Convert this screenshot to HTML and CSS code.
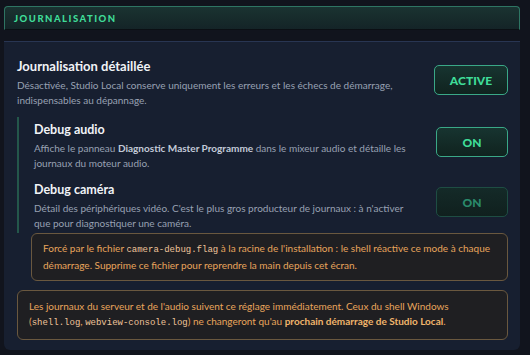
FILE: index.html
```html
<!DOCTYPE html>
<html lang="fr">
<head>
  <meta charset="UTF-8" />
  <title>Journalisation</title>
  <link rel="stylesheet" href="styles.css">
</head>
<body>
  <div class="section-head">JOURNALISATION</div>

  <div class="panel">
    <div class="row main-row">
      <div class="row-text">
        <div class="row-title big">Journalisation détaillée</div>
        <div class="row-desc">Désactivée, Studio Local conserve uniquement les erreurs et les échecs de démarrage, indispensables au dépannage.</div>
      </div>
      <button class="toggle wide">ACTIVE</button>
    </div>

    <div class="sub-group">
      <div class="row">
        <div class="row-text">
          <div class="row-title">Debug audio</div>
          <div class="row-desc">Affiche le panneau <b>Diagnostic Master Programme</b> dans le mixeur audio et détaille les journaux du moteur audio.</div>
        </div>
        <button class="toggle">ON</button>
      </div>
      <div class="row">
        <div class="row-text">
          <div class="row-title">Debug caméra</div>
          <div class="row-desc">Détail des périphériques vidéo. C'est le plus gros producteur de journaux : à n'activer que pour diagnostiquer une caméra.</div>
        </div>
        <button class="toggle dim" disabled>ON</button>
      </div>
    </div>

    <div class="note forced">Forcé par le fichier <code>camera-debug.flag</code> à la racine de l'installation : le shell réactive ce mode à chaque démarrage. Supprime ce fichier pour reprendre la main depuis cet écran.</div>

    <div class="note">Les journaux du serveur et de l'audio suivent ce réglage immédiatement. Ceux du shell Windows (<code>shell.log</code>, <code>webview-console.log</code>) ne changeront qu'au <b>prochain démarrage de Studio Local</b>.</div>
  </div>
</body>
</html>
```

FILE: styles.css
```css
body {
  margin: 0;
  padding: 6px 10px 10px 4px;
  background-color: #11141d;
  font-family: 'Lato', 'Segoe UI', sans-serif;
  color: #eef1f6;
}
.section-head {
  height: 22px;
  line-height: 23px;
  padding-left: 9px;
  border: 1px solid #2e7563;
  border-bottom: 1px solid #0b0f14;
  border-radius: 4px 4px 0 0;
  background: linear-gradient(#1a3331, #142427);
  color: #3fdc98;
  font-size: 9.5px;
  font-weight: 900;
  letter-spacing: 1.5px;
}
.panel {
  margin-top: 11px;
  padding: 16px 12px 10px 13px;
  background-color: #171f30;
  border-top: 1px solid #283552;
  border-radius: 0 0 6px 6px;
}
.row {
  display: flex;
  justify-content: space-between;
  align-items: flex-start;
  gap: 20px;
}
.row-text {
  flex: 1;
}
.row-title {
  font-size: 12.5px;
  line-height: 17px;
  font-weight: 700;
  color: #f1f3f7;
}
.row-title.big {
  font-size: 13px;
}
.row-desc {
  margin-top: 3px;
  font-size: 10px;
  line-height: 15px;
  color: #98a1b3;
}
.row-desc b {
  color: #c3cad8;
}
.toggle {
  width: 72px;
  height: 30px;
  margin-top: 6px;
  border: 1px solid #3aa887;
  border-radius: 5px;
  background: linear-gradient(#173430, #10231f);
  color: #3fdc98;
  font-family: inherit;
  font-size: 12px;
  font-weight: 900;
}
.toggle.wide {
  width: 74px;
  margin-top: 7px;
}
.toggle.dim {
  border-color: #1e4d43;
  color: #2a8a6b;
  background: linear-gradient(#142a28, #10201e);
}
.sub-group {
  margin-top: 9px;
  padding: 4px 0 2px 15px;
  border-left: 2px solid #24574b;
}
.sub-group .row + .row {
  margin-top: 10px;
}
.note {
  margin-top: 9px;
  padding: 8px 11px;
  border: 1px solid #6a583f;
  border-radius: 6px;
  background-color: #1f1f22;
  color: #e8a55c;
  font-size: 10px;
  line-height: 15px;
}
.note.forced {
  margin-left: 14px;
  margin-top: 0;
  padding: 7px 11px;
}
.note b {
  color: #f0b56c;
}
code {
  font-family: 'Liberation Mono', monospace;
  font-size: 9px;
  line-height: 15px;
  color: #efc49a;
}
```
